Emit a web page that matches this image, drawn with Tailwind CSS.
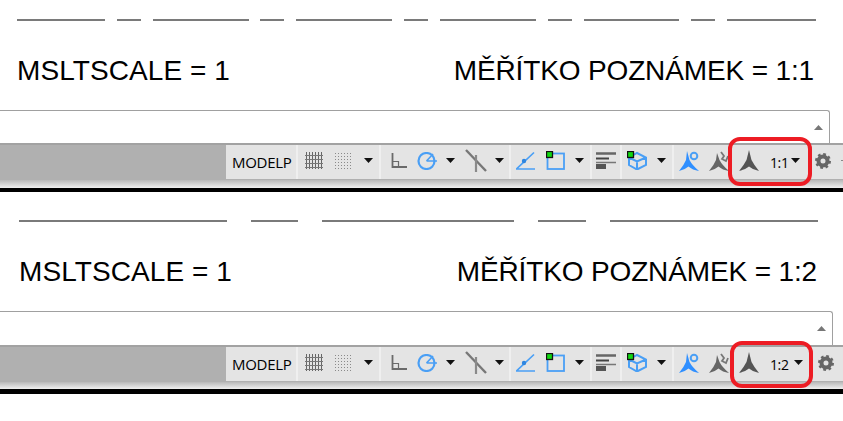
<!DOCTYPE html>
<html lang="cs">
<head>
  <meta charset="UTF-8" />
  <title>MSLTSCALE</title>
  <script src="https://cdn.jsdelivr.net/npm/@tailwindcss/browser@4"></script>
</head>
<body class="bg-white w-[843px] h-[421px] overflow-hidden font-['Liberation_Sans',Arial,sans-serif]">
  <!-- shared toolbar icons -->
  <svg class="hidden" xmlns="http://www.w3.org/2000/svg">
    <symbol id="arrow" viewBox="0 0 9 5"><path d="M0 0H9L4.500 5Z" fill="#111"/></symbol>
    <symbol id="grid" viewBox="0 0 18 17"><path d="M1.500 0V17M4.500 0V17M7.500 0V17M10.500 0V17M13.500 0V17M16.500 0V17" stroke="#666"/><path d="M0 3.500H18M0 7.500H18M0 11.500H18M0 15.500H18" stroke="#777"/></symbol>
    <symbol id="dots" viewBox="0 0 18 17"><path d="M0 1.500H18M0 4.500H18M0 7.500H18M0 10.500H18M0 13.500H18M0 16.500H18" stroke="#8a8a8a" stroke-dasharray="1 2"/></symbol>
    <symbol id="ortho" viewBox="0 0 16 15"><path d="M1.500 0V14H16" fill="none" stroke="#6a6a6a" stroke-width="1.800"/><path d="M1.500 8.500H7.500V14" fill="none" stroke="#6a6a6a" stroke-width="1.200"/></symbol>
    <symbol id="polar" viewBox="0 0 20 18"><circle cx="9.500" cy="9" r="8" fill="none" stroke="#4a9ff5" stroke-width="2.200"/><path d="M9.500 9H20M9.500 9L16 2" fill="none" stroke="#4a9ff5" stroke-width="1.600"/></symbol>
    <symbol id="snap" viewBox="0 0 22 24"><path d="M1 1L21 22" stroke="#777" stroke-width="2.400"/><path d="M11 6V23" stroke="#8a8a8a" stroke-width="2.200"/></symbol>
    <symbol id="iso" viewBox="0 0 19 19"><path d="M0.500 18L18 1.500M0 18H19" fill="none" stroke="#4a9ff5" stroke-width="1.700"/><circle cx="8" cy="10" r="2.200" fill="#2f86e0"/></symbol>
    <symbol id="square" viewBox="0 0 19 19"><rect x="1.500" y="2.500" width="16.500" height="15.500" fill="none" stroke="#4a9ff5" stroke-width="1.800"/><rect x="0.500" y="0.500" width="6" height="6" fill="#10d810" stroke="#111" stroke-width="1.300"/></symbol>
    <symbol id="lines" viewBox="0 0 20 17"><path d="M0 1.500H20" stroke="#666" stroke-width="2.500"/><path d="M0 6.500H13" stroke="#444" stroke-width="2"/><path d="M0 10.500H20" stroke="#777" stroke-width="1.500"/><path d="M0 14.500H10" stroke="#555" stroke-width="5"/></symbol>
    <symbol id="cube" viewBox="0 0 20 19"><path d="M10 2L19 6.500V14L10 18.500L2 14V6.500ZM2 6.500L10 10.500L19 6.500M10 10.500V18.500" fill="none" stroke="#4a9ff5" stroke-width="2"/><rect x="0.500" y="0.500" width="6" height="6" fill="#10d810" stroke="#111" stroke-width="1.300"/></symbol>
    <symbol id="blueAnno" viewBox="0 0 20 20"><path d="M8 0L10.500 9Q13 14 20 20Q13.500 19 9.500 15.500Q5.500 19 0 20Q5 14 7 9Z" fill="#2f8fff"/><circle cx="15" cy="5" r="3.300" fill="none" stroke="#4a9ff5" stroke-width="2"/></symbol>
    <symbol id="grayAnno" viewBox="0 0 20 20"><path d="M8 2L10.500 9Q13 14 20 20Q13.500 19 9.500 15.500Q5.500 19 0 20Q5 14 7 9Z" fill="#666"/><path d="M12 1L15 5L13 8L17 10L19 5" fill="none" stroke="#777" stroke-width="1.800"/></symbol>
    <symbol id="anno" viewBox="0 0 20 22"><path d="M10 0L12.500 10Q15 15 20 21Q14 20 10 16.500Q6 20 0 21Q5 15 7.500 10Z" fill="#555"/></symbol>
    <symbol id="gear" viewBox="0 0 16 16"><circle cx="8" cy="8" r="4.500" fill="none" stroke="#666" stroke-width="4"/><circle cx="8" cy="8" r="6.800" fill="none" stroke="#666" stroke-width="2.400" stroke-dasharray="2.700 2.640"/></symbol>
  </svg>

  <!-- top: line scale 1:1 -->
  <section class="relative h-[200px] pt-[19px]">
    <div class="flex h-[2px] pl-[17px]">
      <div class="w-[88px] bg-[#7a7a7a]"></div>
      <div class="w-[24px] ml-[12px] bg-[#7a7a7a]"></div>
      <div class="w-[96px] ml-[12px] bg-[#7a7a7a]"></div>
      <div class="w-[24px] ml-[11px] bg-[#7a7a7a]"></div>
      <div class="w-[96px] ml-[12px] bg-[#7a7a7a]"></div>
      <div class="w-[24px] ml-[12px] bg-[#7a7a7a]"></div>
      <div class="w-[96px] ml-[12px] bg-[#7a7a7a]"></div>
      <div class="w-[24px] ml-[12px] bg-[#7a7a7a]"></div>
      <div class="w-[95px] ml-[12px] bg-[#7a7a7a]"></div>
      <div class="w-[24px] ml-[12px] bg-[#7a7a7a]"></div>
      <div class="w-[89px] ml-[12px] bg-[#7a7a7a]"></div>
    </div>
    <div class="flex justify-between h-[32px] mt-[34px] pl-[17px] pr-[29px] text-[28px] leading-[32px] text-black">
      <span class="tracking-[0.08px]">MSLTSCALE = 1</span>
      <span class="tracking-[-0.14px]">MĚŘÍTKO POZNÁMEK = 1:1</span>
    </div>
    <div class="flex items-center justify-end w-[830px] h-[33px] mt-[23px] border border-l-0 border-b-0 border-[#a0a0a0] rounded-tr-[3px] bg-white pr-[6px]">
      <svg class="w-[9px] h-[5px]" viewBox="0 0 9 5"><path d="M0 5H9L4.500 0Z" fill="#777"/></svg>
    </div>
    <div class="flex h-[37px] border-t-2 border-[#a2a2a2] bg-[#b0b0b0]">
      <div class="flex ml-[226px] flex-1 h-[34px] bg-[#e4e4e4] text-black">
        <div class="flex flex-none items-center w-[72px] pl-[6px] border-r-2 border-[#efefef] font-['Open_Sans',sans-serif] font-medium text-[15px] tracking-[-0.3px]">MODELP</div>
        <div class="flex flex-none items-center w-[83px] pb-[3px] border-r-2 border-[#efefef]">
          <svg class="ml-[7px] w-[18px] h-[17px] flex-none"><use href="#grid"/></svg>
          <svg class="ml-[12px] w-[18px] h-[17px] flex-none blur-[0.3px]"><use href="#dots"/></svg>
          <svg class="ml-[11px] w-[9px] h-[5px] flex-none"><use href="#arrow"/></svg>
        </div>
        <div class="flex flex-none items-center w-[130px] pb-[3px] border-r-2 border-[#efefef]">
          <svg class="ml-[10px] w-[16px] h-[15px] flex-none blur-[0.4px]"><use href="#ortho"/></svg>
          <svg class="ml-[10px] w-[20px] h-[18px] flex-none blur-[0.5px]"><use href="#polar"/></svg>
          <svg class="ml-[9px] w-[9px] h-[5px] flex-none"><use href="#arrow"/></svg>
          <svg class="ml-[10px] w-[22px] h-[24px] flex-none blur-[0.4px]"><use href="#snap"/></svg>
          <svg class="ml-[8px] w-[9px] h-[5px] flex-none"><use href="#arrow"/></svg>
        </div>
        <div class="flex flex-none items-center w-[81px] pb-[3px] border-r-2 border-[#efefef]">
          <svg class="ml-[5px] w-[19px] h-[19px] flex-none blur-[0.4px]"><use href="#iso"/></svg>
          <svg class="ml-[11px] w-[19px] h-[19px] flex-none blur-[0.3px]"><use href="#square"/></svg>
          <svg class="ml-[10px] w-[9px] h-[5px] flex-none"><use href="#arrow"/></svg>
        </div>
        <div class="flex flex-none items-center w-[30px] pb-[3px] border-r-2 border-[#efefef]">
          <svg class="ml-[4px] w-[20px] h-[17px] flex-none blur-[0.3px]"><use href="#lines"/></svg>
        </div>
        <div class="flex flex-none items-center w-[52px] pb-[3px] border-r-2 border-[#efefef]">
          <svg class="ml-[5px] w-[20px] h-[19px] flex-none blur-[0.3px]"><use href="#cube"/></svg>
          <svg class="ml-[10px] w-[9px] h-[5px] flex-none"><use href="#arrow"/></svg>
        </div>
        <div class="flex items-center pb-[3px]">
          <svg class="ml-[5px] w-[20px] h-[20px] flex-none blur-[0.4px]"><use href="#blueAnno"/></svg>
          <svg class="ml-[10px] w-[20px] h-[20px] flex-none blur-[0.4px]"><use href="#grayAnno"/></svg>
          <svg class="ml-[10px] w-[20px] h-[22px] flex-none blur-[0.4px]"><use href="#anno"/></svg>
          <span class="ml-[11px] mt-[3px] w-[17px] flex-none font-['Open_Sans',sans-serif] text-[14px] tracking-[-0.4px]">1:1</span>
          <svg class="ml-[4px] w-[9px] h-[5px] flex-none"><use href="#arrow"/></svg>
          <svg class="ml-[15px] w-[16px] h-[16px] flex-none blur-[0.4px]"><use href="#gear"/></svg>
          <div class="ml-[10px] w-[2px] h-[1px] flex-none bg-[#888]"></div>
        </div>
      </div>
    </div>
    <div class="h-[8px] bg-gradient-to-b from-[#b8b8b8] to-[#f0f0f0]"></div>
    <div class="h-[4px] bg-black"></div>
    <div class="absolute left-[728px] top-[137px] w-[84px] h-[49px] border-4 border-[#ed1c24] rounded-[12px]"></div>
  </section>

  <!-- bottom: line scale 1:2 -->
  <section class="relative h-[221px] pt-[20px]">
    <div class="flex h-[2px] pl-[19px]">
      <div class="w-[208px] bg-[#7a7a7a]"></div>
      <div class="w-[47px] ml-[24px] bg-[#7a7a7a]"></div>
      <div class="w-[192px] ml-[24px] bg-[#7a7a7a]"></div>
      <div class="w-[48px] ml-[24px] bg-[#7a7a7a]"></div>
      <div class="w-[208px] ml-[24px] bg-[#7a7a7a]"></div>
    </div>
    <div class="flex justify-between h-[32px] mt-[34px] pl-[19px] pr-[26px] text-[28px] leading-[32px] text-black">
      <span class="tracking-[0.08px]">MSLTSCALE = 1</span>
      <span class="tracking-[-0.14px]">MĚŘÍTKO POZNÁMEK = 1:2</span>
    </div>
    <div class="flex items-center justify-end w-[833px] h-[34px] mt-[23px] border border-l-0 border-b-0 border-[#a0a0a0] rounded-tr-[3px] bg-white pr-[6px]">
      <svg class="w-[9px] h-[5px]" viewBox="0 0 9 5"><path d="M0 5H9L4.500 0Z" fill="#777"/></svg>
    </div>
    <div class="flex h-[37px] border-t-2 border-[#a2a2a2] bg-[#b0b0b0]">
      <div class="flex ml-[226px] flex-1 h-[34px] bg-[#e4e4e4] text-black">
        <div class="flex flex-none items-center w-[72px] pl-[6px] border-r-2 border-[#efefef] font-['Open_Sans',sans-serif] font-medium text-[15px] tracking-[-0.3px]">MODELP</div>
        <div class="flex flex-none items-center w-[83px] pb-[3px] border-r-2 border-[#efefef]">
          <svg class="ml-[7px] w-[18px] h-[17px] flex-none"><use href="#grid"/></svg>
          <svg class="ml-[12px] w-[18px] h-[17px] flex-none blur-[0.3px]"><use href="#dots"/></svg>
          <svg class="ml-[11px] w-[9px] h-[5px] flex-none"><use href="#arrow"/></svg>
        </div>
        <div class="flex flex-none items-center w-[130px] pb-[3px] border-r-2 border-[#efefef]">
          <svg class="ml-[10px] w-[16px] h-[15px] flex-none blur-[0.4px]"><use href="#ortho"/></svg>
          <svg class="ml-[10px] w-[20px] h-[18px] flex-none blur-[0.5px]"><use href="#polar"/></svg>
          <svg class="ml-[9px] w-[9px] h-[5px] flex-none"><use href="#arrow"/></svg>
          <svg class="ml-[10px] w-[22px] h-[24px] flex-none blur-[0.4px]"><use href="#snap"/></svg>
          <svg class="ml-[8px] w-[9px] h-[5px] flex-none"><use href="#arrow"/></svg>
        </div>
        <div class="flex flex-none items-center w-[81px] pb-[3px] border-r-2 border-[#efefef]">
          <svg class="ml-[5px] w-[19px] h-[19px] flex-none blur-[0.4px]"><use href="#iso"/></svg>
          <svg class="ml-[11px] w-[19px] h-[19px] flex-none blur-[0.3px]"><use href="#square"/></svg>
          <svg class="ml-[10px] w-[9px] h-[5px] flex-none"><use href="#arrow"/></svg>
        </div>
        <div class="flex flex-none items-center w-[30px] pb-[3px] border-r-2 border-[#efefef]">
          <svg class="ml-[4px] w-[20px] h-[17px] flex-none blur-[0.3px]"><use href="#lines"/></svg>
        </div>
        <div class="flex flex-none items-center w-[52px] pb-[3px] border-r-2 border-[#efefef]">
          <svg class="ml-[5px] w-[20px] h-[19px] flex-none blur-[0.3px]"><use href="#cube"/></svg>
          <svg class="ml-[10px] w-[9px] h-[5px] flex-none"><use href="#arrow"/></svg>
        </div>
        <div class="flex items-center pb-[3px]">
          <svg class="ml-[5px] w-[20px] h-[20px] flex-none blur-[0.4px]"><use href="#blueAnno"/></svg>
          <svg class="ml-[10px] w-[20px] h-[20px] flex-none blur-[0.4px]"><use href="#grayAnno"/></svg>
          <svg class="ml-[10px] w-[20px] h-[22px] flex-none blur-[0.4px]"><use href="#anno"/></svg>
          <span class="ml-[11px] mt-[3px] w-[18px] flex-none font-['Open_Sans',sans-serif] text-[14px] tracking-[-0.4px]">1:2</span>
          <svg class="ml-[6px] w-[9px] h-[5px] flex-none"><use href="#arrow"/></svg>
          <svg class="ml-[15px] w-[16px] h-[16px] flex-none blur-[0.4px]"><use href="#gear"/></svg>
        </div>
      </div>
    </div>
    <div class="h-[7px] bg-gradient-to-b from-[#b8b8b8] to-[#f0f0f0]"></div>
    <div class="h-[5px] bg-black"></div>
    <div class="absolute left-[730px] top-[141px] w-[83px] h-[47px] border-4 border-[#ed1c24] rounded-[12px]"></div>
  </section>
</body>
</html>
